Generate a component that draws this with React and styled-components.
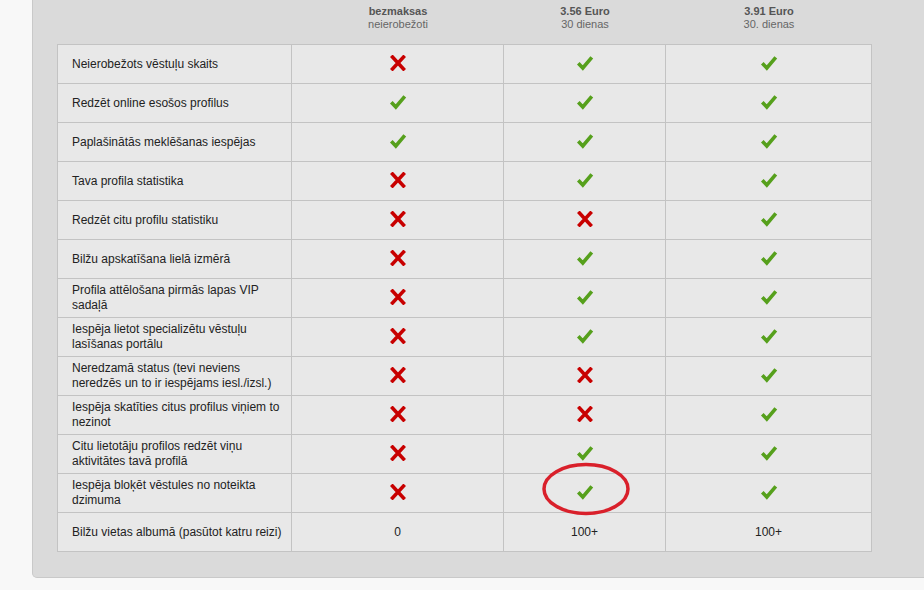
import React from 'react';
import styled, { createGlobalStyle } from 'styled-components';

const GlobalStyle = createGlobalStyle`
  html, body {
    margin: 0;
    padding: 0;
    background: #f8f8f8;
    font-family: "Liberation Sans", Arial, sans-serif;
  }
`;

const COLS = '234px 212px 162px 206px';

const Panel = styled.div`
  margin-left: 32px;
  width: 863px;
  padding: 0 24px 25px;
  background: #dadada;
  border: 1px solid #c9c9c9;
  border-top: none;
  border-radius: 0 0 5px 5px;
`;

const Head = styled.div`
  display: grid;
  grid-template-columns: ${COLS};
  height: 44px;
  padding-left: 1px;
  box-sizing: border-box;
`;

const Plan = styled.div`
  padding-top: 5px;
  text-align: center;
  font-size: 11px;
  line-height: 13px;
  color: #666;

  b {
    display: block;
    color: #555;
  }
`;

const TableWrap = styled.div`
  position: relative;
`;

const Table = styled.div`
  display: grid;
  grid-template-columns: ${COLS};
  border-top: 1px solid #c3c3c3;
  border-left: 1px solid #c3c3c3;
  background: #e8e8e8;
  width: 814px;
`;

const Cell = styled.div`
  height: 38px;
  border-right: 1px solid #c3c3c3;
  border-bottom: 1px solid #c3c3c3;
  display: flex;
  align-items: center;
  justify-content: ${({ $label }) => ($label ? 'flex-start' : 'center')};
  padding-left: ${({ $label }) => ($label ? '14px' : '0')};
  font-size: 12px;
  line-height: 15px;
  color: #222;
  white-space: nowrap;

  svg {
    margin-top: -3px;
  }
`;

const Mark = styled.div`
  position: absolute;
  left: 484px;
  top: 418px;
  pointer-events: none;
`;

const Cross = () => (
  <svg width="16" height="16" viewBox="0 0 16 16">
    <path d="M2.5 2 L13.5 14 M13.5 2 L2.5 14" stroke="#c80000" strokeWidth="3.5" strokeLinecap="square" fill="none" />
  </svg>
);

const Check = () => (
  <svg width="18" height="16" viewBox="0 0 18 16">
    <path d="M2.3 8.3 L6.8 13 L15.8 2.3" stroke="#56a01c" strokeWidth="3.6" strokeLinejoin="miter" fill="none" />
  </svg>
);

const rows = [
  ['Neierobežots vēstuļu skaits', 0, 1, 1],
  ['Redzēt online esošos profilus', 1, 1, 1],
  ['Paplašinātās meklēšanas iespējas', 1, 1, 1],
  ['Tava profila statistika', 0, 1, 1],
  ['Redzēt citu profilu statistiku', 0, 0, 1],
  ['Bilžu apskatīšana lielā izmērā', 0, 1, 1],
  ['Profila attēlošana pirmās lapas VIP\nsadaļā', 0, 1, 1],
  ['Iespēja lietot specializētu vēstuļu\nlasīšanas portālu', 0, 1, 1],
  ['Neredzamā status (tevi neviens\nneredzēs un to ir iespējams iesl./izsl.)', 0, 0, 1],
  ['Iespēja skatīties citus profilus viņiem to\nnezinot', 0, 0, 1],
  ['Citu lietotāju profilos redzēt viņu\naktivitātes tavā profilā', 0, 1, 1],
  ['Iespēja bloķēt vēstules no noteikta\ndzimuma', 0, 1, 1],
];

const Label = ({ text }) => (
  <Cell $label>
    <div>
      {text.split('\n').map((l, i) => (
        <div key={i}>{l}</div>
      ))}
    </div>
  </Cell>
);

export default function App() {
  return (
    <>
      <GlobalStyle />
      <Panel>
        <Head>
          <div />
          <Plan><b>bezmaksas</b>neierobežoti</Plan>
          <Plan><b>3.56 Euro</b>30 dienas</Plan>
          <Plan><b>3.91 Euro</b>30. dienas</Plan>
        </Head>
        <TableWrap>
          <Table>
            {rows.map(([label, ...vals], i) => (
              <React.Fragment key={i}>
                <Label text={label} />
                {vals.map((v, j) => (
                  <Cell key={j}>{v ? <Check /> : <Cross />}</Cell>
                ))}
              </React.Fragment>
            ))}
            <Label text="Bilžu vietas albumā (pasūtot katru reizi)" />
            <Cell>0</Cell>
            <Cell>100+</Cell>
            <Cell>100+</Cell>
          </Table>
          <Mark>
            <svg width="90" height="54" viewBox="0 0 90 54">
              <ellipse cx="45" cy="27" rx="42" ry="24.5" fill="none" stroke="#d9202b" strokeWidth="3.5" />
            </svg>
          </Mark>
        </TableWrap>
      </Panel>
    </>
  );
}
